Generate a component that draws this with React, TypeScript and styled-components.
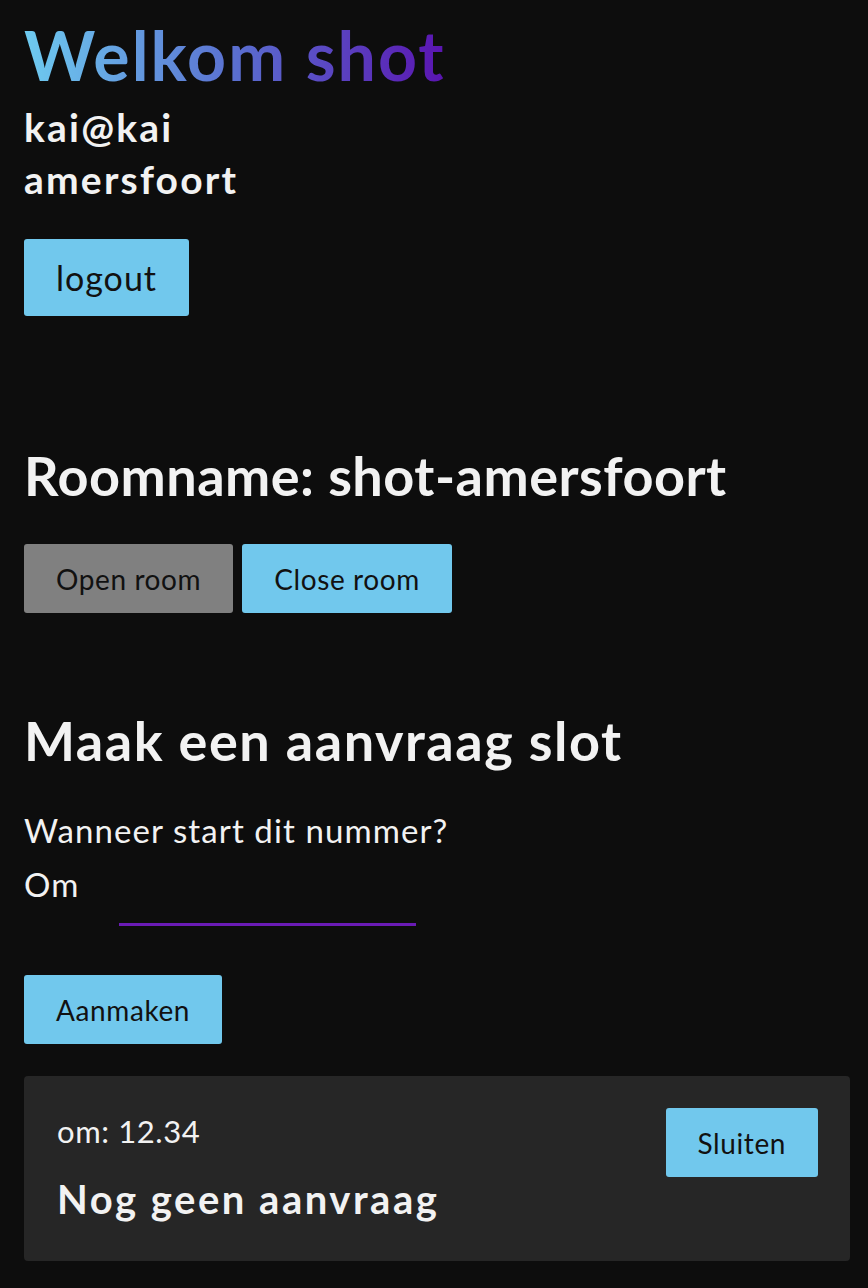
import React from "react";
import styled, { createGlobalStyle } from "styled-components";

const Global = createGlobalStyle`
  html, body { margin: 0; padding: 0; background: #0d0d0d; }
  body { font-family: Lato, "Noto Sans", sans-serif; color: #f2f2f2; }
  * { box-sizing: border-box; }
`;

const Page = styled.main`
  padding: 21px 18px 40px 24px;
  display: flex;
  flex-direction: column;
  align-items: flex-start;
`;

const Title = styled.h1`
  margin: 0;
  font-size: 68px;
  line-height: 1;
  font-weight: 700;
  letter-spacing: 2px;
  background: linear-gradient(90deg, #6ecbf0 0%, #5a6fd0 50%, #5a14b0 100%);
  -webkit-background-clip: text;
  background-clip: text;
  color: transparent;
`;

const UserLine = styled.div<{ $first?: boolean }>`
  font-size: 39px;
  font-weight: 700;
  line-height: 52px;
  letter-spacing: 2.2px;
  margin-top: ${(p) => (p.$first ? "12px" : "0")};
`;

const Button = styled.button<{ $variant?: "primary" | "muted"; $big?: boolean }>`
  font-family: inherit;
  border: none;
  border-radius: 3px;
  cursor: pointer;
  color: #111;
  background: ${(p) => (p.$variant === "muted" ? "#808080" : "#71c8ed")};
  font-size: ${(p) => (p.$big ? "34px" : "28px")};
  letter-spacing: ${(p) => (p.$big ? "1px" : "0.6px")};
  height: ${(p) => (p.$big ? "77px" : "69px")};
  padding: 0 32px;
`;

const Heading = styled.h2<{ $spacing: number }>`
  margin: 0;
  font-weight: 700;
  font-size: 54px;
  line-height: 1;
  letter-spacing: ${(p) => p.$spacing}px;
`;

const Section = styled.section<{ $top: number }>`
  margin-top: ${(p) => p.$top}px;
  display: flex;
  flex-direction: column;
  align-items: flex-start;
  width: 100%;
`;

const ButtonRow = styled.div<{ $top: number }>`
  display: flex;
  gap: 9px;
  margin-top: ${(p) => p.$top}px;
`;

const Label = styled.p<{ $top?: number }>`
  margin: ${(p) => p.$top ?? 0}px 0 0;
  font-size: 33px;
  line-height: 54px;
  letter-spacing: 1.1px;
`;

const TimeRow = styled.div`
  display: flex;
  align-items: flex-start;
`;

const TimeInput = styled.input`
  margin-left: 40px;
  margin-top: 33px;
  width: 297px;
  height: 36px;
  padding: 0;
  background: transparent;
  border: none;
  border-bottom: 3px solid #6a1bb5;
  outline: none;
  color: #f2f2f2;
  font-family: inherit;
  font-size: 28px;
`;

const Card = styled.div`
  margin-top: 32px;
  width: 826px;
  background: #262626;
  border-radius: 4px;
  padding: 32px 32px 42px 33px;
  display: flex;
  justify-content: space-between;
  align-items: flex-start;
`;

const CardInfo = styled.div`
  display: flex;
  flex-direction: column;
`;

const SlotTime = styled.div`
  font-size: 31px;
  line-height: 46px;
  letter-spacing: 0.6px;
`;

const SlotStatus = styled.div`
  font-size: 40px;
  font-weight: 700;
  line-height: 1;
  letter-spacing: 2.5px;
  margin-top: 25px;
`;

export default function App() {
  return (
    <>
      <Global />
      <Page>
        <Title>Welkom shot</Title>
        <UserLine $first>kai@kai</UserLine>
        <UserLine>amersfoort</UserLine>
        <Section $top={34}>
          <Button $big>logout</Button>
        </Section>
        <Section $top={133}>
          <Heading $spacing={0.5}>Roomname: shot-amersfoort</Heading>
          <ButtonRow $top={41}>
            <Button $variant="muted">Open room</Button>
            <Button>Close room</Button>
          </ButtonRow>
        </Section>
        <Section $top={101}>
          <Heading $spacing={1.5}>Maak een aanvraag slot</Heading>
          <Label $top={35}>Wanneer start dit nummer?</Label>
          <TimeRow>
            <Label>Om</Label>
            <TimeInput type="text" aria-label="Om" />
          </TimeRow>
          <ButtonRow $top={49}>
            <Button>Aanmaken</Button>
          </ButtonRow>
          <Card>
            <CardInfo>
              <SlotTime>om: 12.34</SlotTime>
              <SlotStatus>Nog geen aanvraag</SlotStatus>
            </CardInfo>
            <Button>Sluiten</Button>
          </Card>
        </Section>
      </Page>
    </>
  );
}
